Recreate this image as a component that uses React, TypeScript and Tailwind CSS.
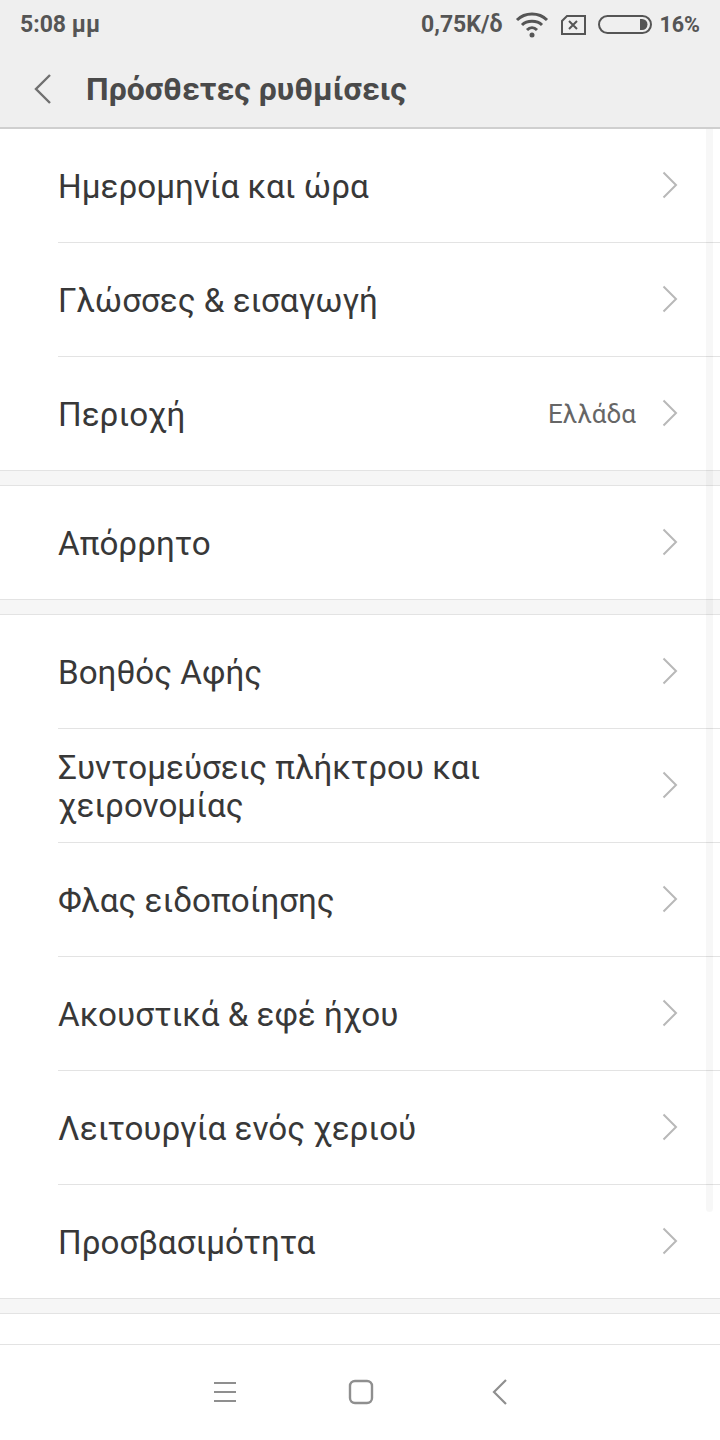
import React from 'react';

const font = { fontFamily: 'Roboto, "Noto Sans", sans-serif' };

const Chevron = () => (
  <svg width="18" height="28" viewBox="0 0 18 28" fill="none" stroke="#b8b8b8" strokeWidth="2" className="shrink-0 mb-[2px]">
    <path d="M2.5 1.5 L15 14 L2.5 26.5" />
  </svg>
);

const Row = ({ label, value, last }: { label: string; value?: string; last?: boolean }) => (
  <div className="pl-[58px]">
    <div className={`flex items-center pr-[41px] ${last ? 'h-[113px]' : 'h-[114px] border-b border-[#e3e3e3]'}`}>
      <span className="flex-1 text-[33.2px] leading-[38px] text-[#383838] pr-[150px] pt-[2px]">{label}</span>
      {value && <span className="text-[26px] text-[#666666] mr-[25px] pt-[2px]">{value}</span>}
      <Chevron />
    </div>
  </div>
);

const Gap = () => <div className="h-[16px] bg-[#f6f6f6] border-y border-[#e3e3e3]" />;

export default function App() {
  return (
    <div className="w-[720px] h-[1440px] bg-white flex flex-col overflow-hidden" style={font}>
      <div className="h-[129px] bg-[#efefef] border-b-2 border-[#cfcfcf] shrink-0">
        <div className="h-[50px] flex items-center pl-[20px] pr-[20px] text-[#555555] font-bold text-[23px]">
          <span>5:08 μμ</span>
          <span className="ml-auto">0,75K/δ</span>
          <svg width="34" height="26" viewBox="0 0 34 26" fill="none" stroke="#555555" strokeWidth="3" className="ml-[13px]">
            <path d="M2 8 C10 0 24 0 32 8" />
            <path d="M7 13 C12 8 22 8 27 13" />
            <path d="M12 18 C15 15 19 15 22 18" />
            <circle cx="17" cy="23" r="2.5" fill="#555555" stroke="none" />
          </svg>
          <svg width="26" height="22" viewBox="0 0 26 22" fill="none" stroke="#555555" strokeWidth="2" className="ml-[11px]">
            <path d="M7 2 H25 V20 H2 V7 Z" />
            <path d="M9 7 L17 15 M17 7 L9 15" />
          </svg>
          <svg width="55" height="20" viewBox="0 0 55 20" fill="none" className="ml-[12px]">
            <rect x="1" y="1" width="52" height="17" rx="8.5" stroke="#555555" strokeWidth="2" />
            <path d="M42 4 H44 A5.5 5.5 0 0 1 44 15 H42 Z" fill="#555555" />
          </svg>
          <span className="ml-[6px] text-[21.5px]">16%</span>
        </div>
        <div className="h-[77px] flex items-center pl-[33px]">
          <svg width="20" height="32" viewBox="0 0 20 32" fill="none" stroke="#707070" strokeWidth="2.4">
            <path d="M17 2 L3 16 L17 30" />
          </svg>
          <span className="ml-[33px] text-[32px] font-bold text-[#4a4a4a]">Πρόσθετες ρυθμίσεις</span>
        </div>
      </div>
      <div className="relative flex-1 overflow-hidden">
        <Row label="Ημερομηνία και ώρα" />
        <Row label="Γλώσσες & εισαγωγή" />
        <Row label="Περιοχή" value="Ελλάδα" last />
        <Gap />
        <Row label="Απόρρητο" last />
        <Gap />
        <Row label="Βοηθός Αφής" />
        <Row label="Συντομεύσεις πλήκτρου και χειρονομίας" />
        <Row label="Φλας ειδοποίησης" />
        <Row label="Ακουστικά & εφέ ήχου" />
        <Row label="Λειτουργία ενός χεριού" />
        <Row label="Προσβασιμότητα" last />
        <Gap />
        {/* scrollbar thumb */}
        <div className="absolute top-0 right-[7px] w-[7px] h-[1083px] rounded-b-[4px] bg-black/[0.03]" />
      </div>
      <div className="h-[96px] border-t border-[#e3e3e3] bg-white shrink-0 flex items-center justify-center pb-[2px] pl-[1px]">
        <svg width="24" height="22" viewBox="0 0 24 22" fill="none" stroke="#8f8f8f" strokeWidth="2">
          <path d="M1 2 H23 M1 11 H23 M1 20 H23" />
        </svg>
        <svg width="26" height="26" viewBox="0 0 26 26" fill="none" stroke="#8f8f8f" strokeWidth="2.4" className="ml-[111px]">
          <rect x="2" y="2" width="22" height="22" rx="5" />
        </svg>
        <svg width="16" height="26" viewBox="0 0 16 26" fill="none" stroke="#8f8f8f" strokeWidth="2.2" className="ml-[118px]">
          <path d="M14 1 L2 13 L14 25" />
        </svg>
      </div>
    </div>
  );
}
